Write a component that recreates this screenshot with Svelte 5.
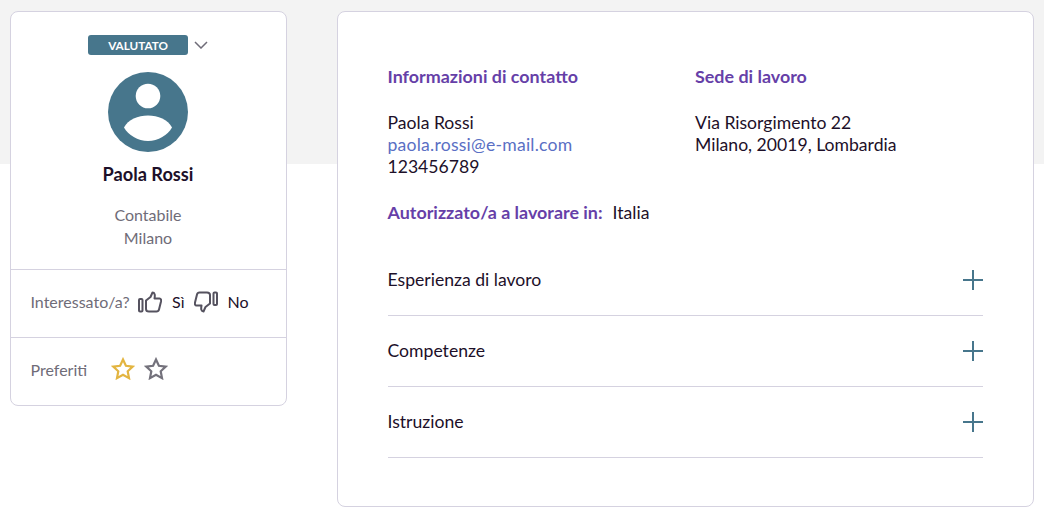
<script>
	const sections = ['Esperienza di lavoro', 'Competenze', 'Istruzione'];
</script>

<div class="page">
	<aside class="card profile">
		<div class="profile-top">
			<div class="status">
				<span class="badge">VALUTATO</span>
				<svg class="chevron" width="14" height="8" viewBox="0 0 14 8" fill="none">
					<path d="M1 1l6 6 6-6" stroke="#6f6c78" stroke-width="1.5" />
				</svg>
			</div>
			<svg class="avatar" width="80" height="80" viewBox="0 0 80 80">
				<circle cx="40" cy="40" r="40" fill="#47768c" />
				<circle cx="40" cy="24" r="12.3" fill="#fff" />
				<path d="M16 55.500C20 47.500 30 43.500 40 43.500S60 47.500 64 55.500C60 63 50 69 40 69S20 63 16 55.500Z" fill="#fff" />
			</svg>
			<div class="name">Paola Rossi</div>
			<div class="meta">Contabile</div>
			<div class="meta">Milano</div>
		</div>

		<div class="row interest">
			<span class="label">Interessato/a?</span>
			<svg class="thumb" width="24" height="22" viewBox="0 0 24 22" fill="none" stroke="#55525f" stroke-width="2" stroke-linejoin="round">
				<rect x="1" y="8" width="3.500" height="12.500" rx="1" />
				<path d="M8 9.500L12.500 6 14.500 1.500C16.800 1.500 17.200 4 16.500 7.500H21.500C23 7.500 23.300 9 23 10.500L21 18.500C20.600 20 19.600 20.500 18.500 20.500H11C9.500 20.500 8 19.500 8 18Z" />
			</svg>
			<span class="answer">Sì</span>
			<svg class="thumb down" width="24" height="22" viewBox="0 0 24 22" fill="none" stroke="#55525f" stroke-width="2" stroke-linejoin="round">
				<rect x="19.500" y="1.500" width="3.500" height="12.500" rx="1" />
				<path d="M16 12.500L11.500 16 9.500 20.500C7.200 20.500 6.800 18 7.500 14.500H2.500C1 14.500 .7 13 1 11.500L3 3.500C3.400 2 4.400 1.500 5.500 1.500H13C14.500 1.500 16 2.500 16 4Z" />
			</svg>
			<span class="answer">No</span>
		</div>

		<div class="row favourites">
			<span class="label fav-label">Preferiti</span>
			<svg class="star" width="24" height="23" viewBox="0 0 24 23" fill="none" stroke="#e3b541" stroke-width="2.200" stroke-linejoin="miter">
				<path d="M12 2.500l2.900 6.300 6.800.8-5 4.700 1.300 6.800-6-3.400-6 3.400 1.300-6.800-5-4.700 6.800-.8Z" />
			</svg>
			<svg class="star" width="24" height="23" viewBox="0 0 24 23" fill="none" stroke="#74727c" stroke-width="2.200" stroke-linejoin="miter">
				<path d="M12 2.500l2.900 6.300 6.800.8-5 4.700 1.300 6.800-6-3.400-6 3.400 1.300-6.800-5-4.700 6.800-.8Z" />
			</svg>
		</div>
	</aside>

	<main class="card details">
		<div class="columns">
			<div class="col-contact">
				<h2>Informazioni di contatto</h2>
				<p>Paola Rossi</p>
				<a href="mailto:paola.rossi@e-mail.com">paola.rossi@e-mail.com</a>
				<p>123456789</p>
			</div>
			<div>
				<h2>Sede di lavoro</h2>
				<p>Via Risorgimento 22</p>
				<p>Milano, 20019, Lombardia</p>
			</div>
		</div>

		<div class="authorized">
			<strong>Autorizzato/a a lavorare in:</strong>
			<span>Italia</span>
		</div>

		<div class="sections">
			{#each sections as section}
				<div class="section">
					<span>{section}</span>
					<svg width="20" height="20" viewBox="0 0 20 20">
						<path d="M10 0v20M0 10h20" stroke="#47768c" stroke-width="2" />
					</svg>
				</div>
			{/each}
		</div>
	</main>
</div>

<style>
	:global(body) {
		background: linear-gradient(#f3f3f3 164px, #fff 164px);
		color: #1d1029;
		font-family: Lato, 'Liberation Sans', sans-serif;
		font-size: 17.6px;
	}

	.page {
		display: flex;
		align-items: flex-start;
		gap: 50px;
		padding: 11px 10px;
	}

	.card {
		background: #fff;
		border: 1px solid #d5d2e0;
		border-radius: 8px;
		box-sizing: border-box;
	}

	.profile {
		width: 277px;
		height: 395px;
	}

	.profile-top {
		display: flex;
		flex-direction: column;
		align-items: center;
		height: 257px;
		padding: 23px 1px 0 0;
		box-sizing: border-box;
	}

	.status {
		display: flex;
		align-items: center;
		gap: 6px;
	}

	.badge {
		width: 100px;
		height: 20px;
		background: #47768c;
		border-radius: 3px;
		color: #fff;
		font-size: 11.7px;
		font-weight: 700;
		line-height: 20px;
		text-align: center;
	}

	.chevron {
		margin-bottom: 1px;
	}

	.avatar {
		margin-top: 17px;
	}

	.name {
		margin-top: 11px;
		font-size: 18.2px;
		font-weight: 700;
		line-height: 22px;
	}

	.meta {
		color: #6f6c78;
		font-size: 16px;
		line-height: 23px;
	}

	.name + .meta {
		margin-top: 18px;
	}

	.row {
		display: flex;
		align-items: center;
		border-top: 1px solid #d5d2e0;
		padding: 0 0 4px 19.500px;
		height: 68px;
		box-sizing: border-box;
	}

	.favourites {
		padding-bottom: 4px;
	}

	.label {
		color: #6f6c78;
		font-size: 16px;
	}

	.thumb {
		margin-left: 8.500px;
	}

	.answer {
		margin-left: 10px;
		font-size: 16px;
	}

	.thumb.down {
		margin-left: 9px;
	}

	.fav-label {
		width: 80.500px;
	}

	.star {
		margin-bottom: 3px;
	}

	.star + .star {
		margin-left: 9px;
	}

	.details {
		width: 697px;
		height: 496px;
		padding: 54px 50px 0 49.500px;
	}

	.columns {
		display: flex;
	}

	.col-contact {
		width: 307.500px;
	}

	h2 {
		margin: 0 0 25px;
		color: #663fa8;
		font-size: 17.9px;
		font-weight: 700;
		line-height: 21px;
	}

	p,
	a {
		display: block;
		margin: 0;
		line-height: 22px;
	}

	a {
		color: #5a6fc4;
		letter-spacing: 0.22px;
		text-decoration: none;
	}

	.authorized {
		display: flex;
		align-items: baseline;
		gap: 10px;
		margin-top: 23px;
		line-height: 22px;
	}

	.authorized strong {
		color: #663fa8;
		font-size: 17.9px;
	}

	.sections {
		margin-top: 21px;
	}

	.section {
		display: flex;
		align-items: center;
		justify-content: space-between;
		height: 71px;
		border-bottom: 1px solid #d5d2e0;
		box-sizing: border-box;
	}

	.section span {
		margin-bottom: 1px;
	}
</style>
